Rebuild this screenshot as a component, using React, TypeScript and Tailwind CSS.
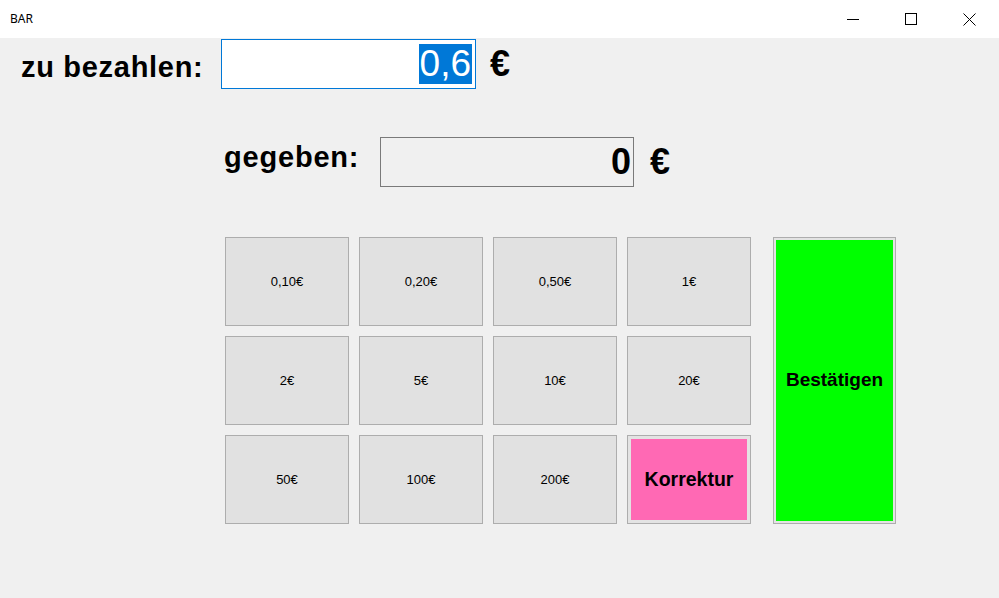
import React from "react";

const coins = ["0,10€", "0,20€", "0,50€", "1€", "2€", "5€", "10€", "20€", "50€", "100€", "200€"];

function TitleBar() {
  return (
    <div className="h-[38px] bg-white flex items-center shrink-0">
      <span className="pl-[10px] text-[12px] text-black font-['Noto_Sans',sans-serif]">BAR</span>
      <div className="ml-auto flex h-full mr-[1px]">
        {/* minimize */}
        <div className="w-[58px] h-full flex items-center justify-center">
          <svg width="12" height="12" viewBox="0 0 12 12">
            <path d="M0 6.5h12" stroke="black" strokeWidth="1" />
          </svg>
        </div>
        {/* maximize */}
        <div className="w-[58px] h-full flex items-center justify-center">
          <svg width="12" height="12" viewBox="0 0 12 12">
            <rect x="0.5" y="0.5" width="11" height="11" fill="none" stroke="black" strokeWidth="1" />
          </svg>
        </div>
        {/* close */}
        <div className="w-[58px] h-full flex items-center justify-center">
          <svg width="13" height="13" viewBox="0 0 13 13">
            <path d="M0.5 0.5l12 12M12.5 0.5l-12 12" stroke="black" strokeWidth="1" />
          </svg>
        </div>
      </div>
    </div>
  );
}

function CoinButton({ label }: { label: string }) {
  return (
    <div className="w-[124px] h-[89px] bg-[#e1e1e1] border border-[#adadad] flex items-center justify-center text-[13px] text-black">
      {label}
    </div>
  );
}

export default function App() {
  return (
    <div className="w-[999px] h-[598px] bg-[#f0f0f0] flex flex-col overflow-hidden font-['Liberation_Sans',Arial,sans-serif]">
      <TitleBar />

      {/* zu bezahlen */}
      <div className="flex items-start mt-[1px]">
        <div className="w-[221px] pl-[21px] pt-[11px] text-[29px] leading-[34px] font-bold tracking-[0.7px] text-black">
          zu bezahlen:
        </div>
        <div className="w-[255px] h-[50px] bg-white border border-[#0078d7] flex items-center justify-end pr-[3px]">
          <span className="bg-[#0078d7] text-white text-[37px] leading-[40px] px-[1px]">0,6</span>
        </div>
        <div className="ml-[14px] pt-[5px] text-[36px] leading-[40px] font-bold text-black">€</div>
      </div>

      {/* gegeben */}
      <div className="flex items-start mt-[48px]">
        <div className="w-[380px] pl-[224px] pt-[3px] text-[29px] leading-[34px] font-bold tracking-[0.8px] text-black">
          gegeben:
        </div>
        <div className="w-[254px] h-[50px] bg-[#f0f0f0] border border-[#7a7a7a] flex items-center justify-end pr-[2px]">
          <span className="text-black text-[36px] leading-[40px] font-bold">0</span>
        </div>
        <div className="ml-[16px] pt-[5px] text-[36px] leading-[40px] font-bold text-black">€</div>
      </div>

      {/* keypad */}
      <div className="flex mt-[50px] ml-[225px]">
        <div className="grid grid-cols-[124px_124px_124px_124px] grid-rows-[89px_89px_89px] gap-[10px]">
          {coins.map((c) => (
            <CoinButton key={c} label={c} />
          ))}
          <div className="w-[124px] h-[89px] border border-[#adadad] bg-[#e3e3e3] p-[3px]">
            <div className="w-full h-full bg-[#ff69b4] flex items-center justify-center text-[19.5px] font-bold text-black">
              Korrektur
            </div>
          </div>
        </div>
        <div className="ml-[22px] w-[123px] h-[287px] border border-[#adadad] bg-[#e3e3e3] p-[2px]">
          <div className="w-full h-full bg-[#00ff00] flex items-center justify-center text-[19px] font-bold text-black">
            Bestätigen
          </div>
        </div>
      </div>
    </div>
  );
}
